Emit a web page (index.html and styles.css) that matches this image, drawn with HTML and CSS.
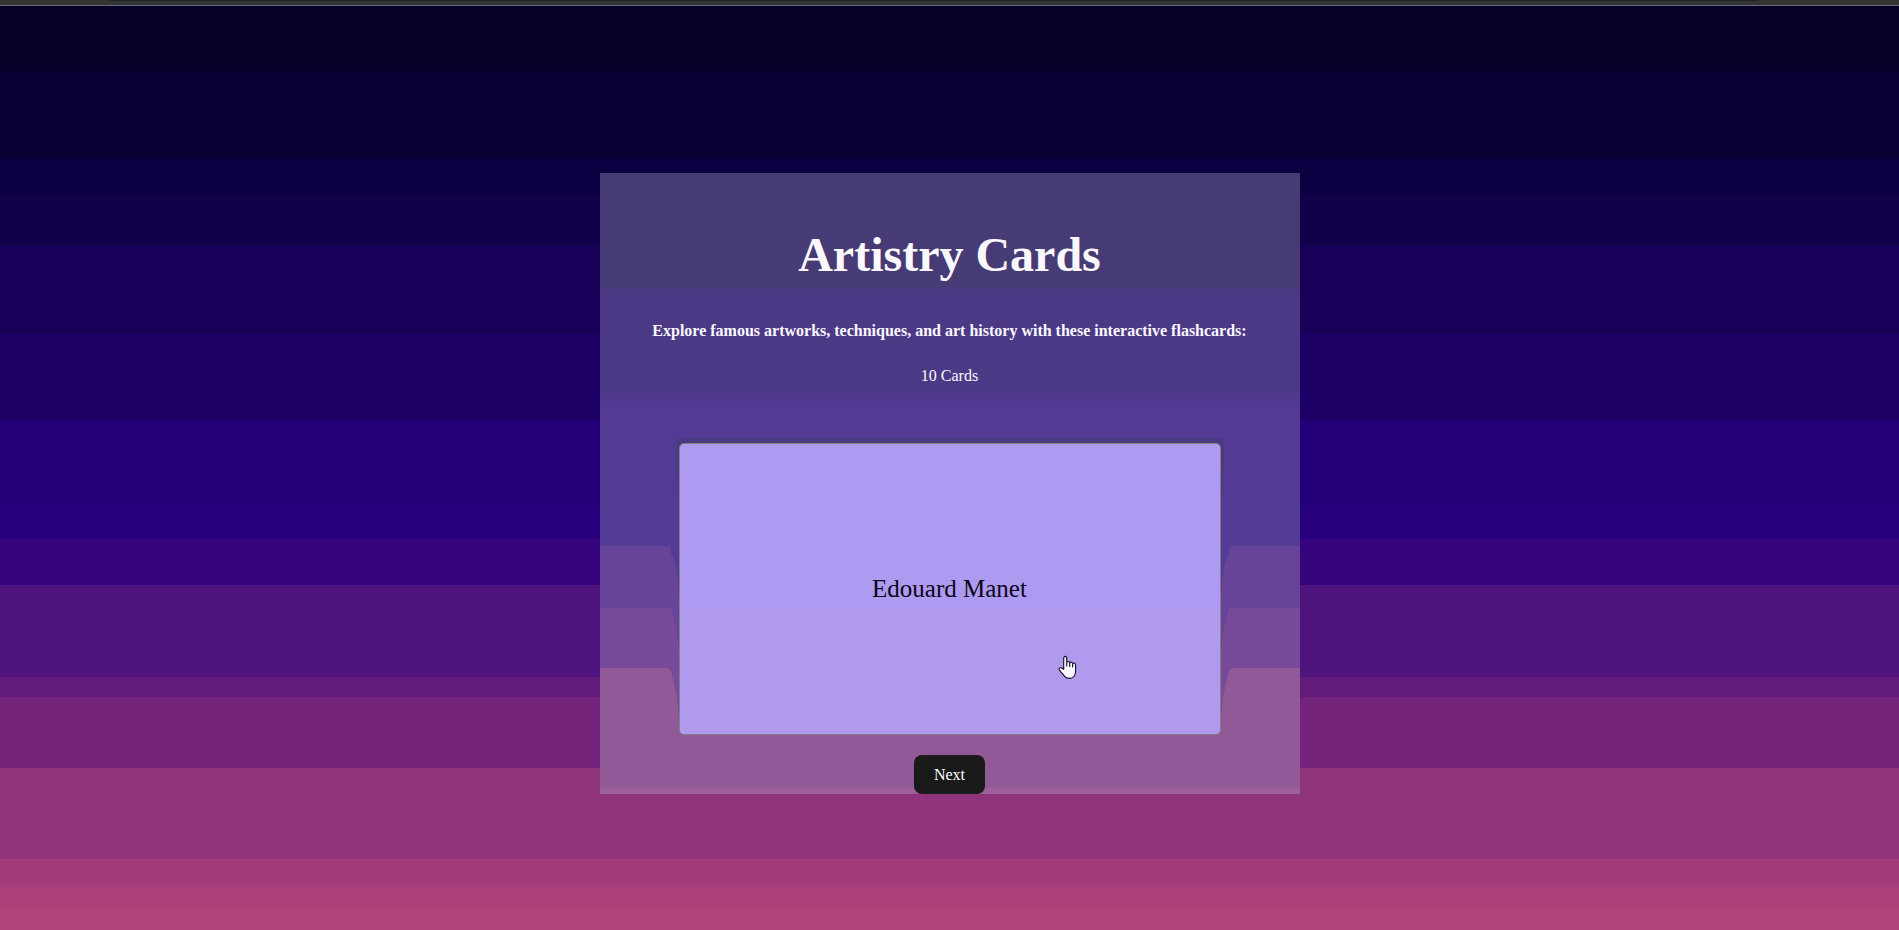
FILE: index.html
```html
<!DOCTYPE html>
<html lang="en">
<head>
<meta charset="utf-8">
<title>Artistry Cards</title>
<link rel="stylesheet" href="styles.css">
</head>
<body>
<div class="topbar"><div class="topbar-line"></div></div>
<main class="stage">
  <section class="panel">
    <h1 class="title">Artistry Cards</h1>
    <h2 class="intro">Explore famous artworks, techniques, and art history with these interactive flashcards:</h2>
    <p class="count">10 Cards</p>
    <div class="card-wrap">
      <svg class="shade shade-left" viewBox="0 0 12 292" aria-hidden="true">
        <path fill="#523a95" d="M2 102h10v52h-1l-1-16-2-13-2-9-3-6z"/>
        <path fill="#67439a" d="M3 165h9v46h-1l-1-14-2-12-2-9z"/>
        <path fill="#774b99" d="M0 225h12v52h-1l-1-12-1-11-2-9-2-9-2-8z"/>
      </svg>
      <svg class="shade shade-right" viewBox="0 0 12 292" aria-hidden="true">
        <path fill="#523a95" d="M2 102h10v52h-1l-1-16-2-13-2-9-3-6z"/>
        <path fill="#67439a" d="M3 165h9v46h-1l-1-14-2-12-2-9z"/>
        <path fill="#774b99" d="M0 225h12v52h-1l-1-12-1-11-2-9-2-9-2-8z"/>
      </svg>
      <button class="flashcard" type="button">Edouard Manet</button>
      <svg class="pointer" viewBox="0 0 20 26" aria-hidden="true">
        <path d="M6 15V3.500C6 .5 9.200.5 9.200 3.500V7.500C10 6.300 12 6.500 12.200 8C13.300 7 15 7.300 15.300 8.700C16.800 7.800 18.500 8.500 18.500 10.500V17C18.500 21.500 16 24.500 12 24.500C8.500 24.500 7 23 5.500 20.500L1.300 15.500C.5 13.500 2.500 12.500 4 13.500Z" fill="#fafafe" stroke="#15102c" stroke-width="1.200" stroke-linejoin="round"/>
        <path d="M9.200 7.500v4.500M12.300 8v4.500M15.400 8.700v4.300" fill="none" stroke="#15102c" stroke-width="1.200"/>
      </svg>
    </div>
    <button class="next" type="button">Next</button>
  </section>
</main>
</body>
</html>
```

FILE: styles.css
```css
* { box-sizing: border-box; }

body {
  margin: 0;
  min-height: 100vh;
  font-family: "Liberation Serif", "Times New Roman", serif;
  font-size: 16px;
  line-height: 24px;
  color: #fbf9ff;
  background: linear-gradient(
    #040028 71px, #080033 71px 158px, #0b0042 160px 194px,
    #11004a 198px 246px, #180059 246px 334px, #1c0066 334px 420px,
    #230079 421px 509px, #28007f 510px 539px, #36057d 539px 585px,
    #4f137d 585px 677px, #621b7b 677px 697px, #73247a 697px 768px,
    #8f337a 768px 859px, #a33b79 859px 884px, #ac3f79 892px 902px,
    #b04378 908px) #b04378;
}

.topbar {
  height: 6px;
  padding: 0 141px 0 110px;
  background: #333;
  border-bottom: 1px solid #68686e;
}

.topbar-line { height: 1px; background: #202124; }

.stage {
  display: flex;
  justify-content: center;
  padding: 167px 0 0;
}

.panel {
  display: flex;
  flex-direction: column;
  align-items: center;
  width: 100%;
  max-width: 700px;
  padding-top: 54px;
  text-align: center;
  background: linear-gradient(
    #473b75 115px, #4c3986 117px 214px, #523a95 234px 372px,
    #67439a 374px 435px, #774b99 435px 495px, #925999 495px 614px,
    #9d5f9c 615px);
}

.title {
  margin: 0 0 36px;
  font-size: 48px;
  line-height: 56px;
}

.intro {
  margin: 0 0 21px;
  font-size: 16px;
}

.count { margin: 0 0 55px; }

.card-wrap {
  position: relative;
  width: 100%;
  max-width: 542px;
  margin-bottom: 20px;
}

.flashcard {
  position: relative;
  display: block;
  width: 100%;
  height: 292px;
  padding: 0;
  border: 1px solid #808080;
  border-radius: 5px;
  background: linear-gradient(#ae9af1 163px, #b09aee 167px);
  color: #0b0618;
  font-family: inherit;
  font-size: 25px;
  cursor: pointer;
}

.card-wrap::before {
  content: "";
  position: absolute;
  inset: -5px -3px auto;
  height: 64px;
  border-radius: 6px;
  background: linear-gradient(#493a82 20px, #523a95);
}

.shade {
  position: absolute;
  top: 0;
  width: 12px;
  height: 292px;
}

.shade-left { left: -11px; }
.shade-right { right: -11px; transform: scaleX(-1); }

.pointer {
  position: absolute;
  left: 70%;
  top: 212px;
  width: 19px;
  height: 25px;
  pointer-events: none;
}

.next {
  padding: 7px 20px;
  border: 0;
  border-radius: 8px;
  background: #1a1a1a;
  color: #fff;
  font: inherit;
  line-height: 25px;
  cursor: pointer;
}
```
